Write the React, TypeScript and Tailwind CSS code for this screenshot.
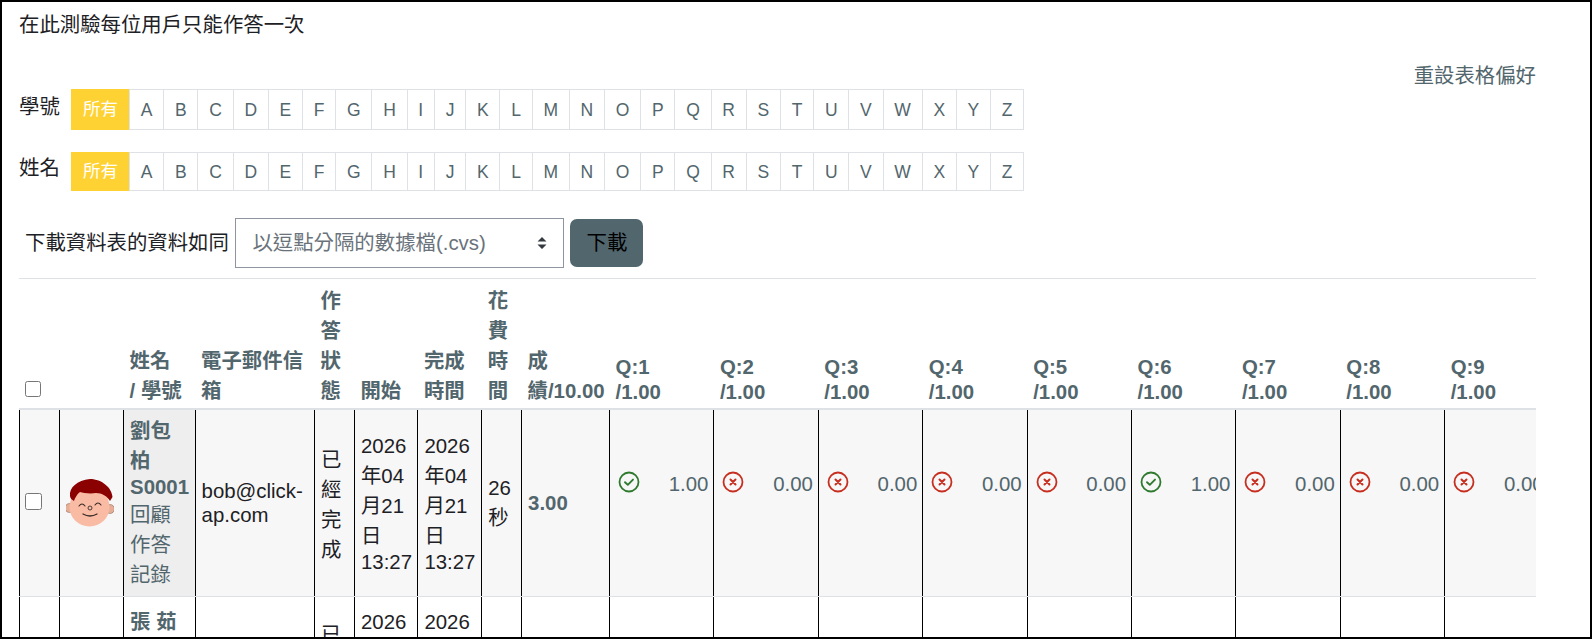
import React from "react";

const letters = "ABCDEFGHIJKLMNOPQRSTUVWXYZ".split("");

function Avatar() {
  return (
    <svg width="48" height="50" viewBox="16 18 48 50" className="block">
      <circle cx="19.500" cy="48" r="4.500" fill="#e6ae96" stroke="#7a6052" strokeWidth="0.5" />
      <circle cx="60" cy="49" r="4.500" fill="#e6ae96" stroke="#7a6052" strokeWidth="0.5" />
      <ellipse cx="39.500" cy="47" rx="20" ry="19.500" fill="#f9bba3" />
      <path d="M20 36C19 28 27 20 40 19c12 0 22 9 22.500 18L60 41c-3-5-8-8-14-8-6 1-13 0-16-1-3 2-5 6-6 9-2-1-4-3-4-5z" fill="#8b0000" />
      <path d="M29 46q3-4 6 0M45 45q3-4 6 0" fill="none" stroke="#3a2a25" strokeWidth="1.1" strokeLinecap="round" />
      <circle cx="40" cy="48" r="2" fill="none" stroke="#4a3a35" strokeWidth="1" />
      <path d="M33 54q7 4 14 0" fill="none" stroke="#3a2a25" strokeWidth="1.300" strokeLinecap="round" />
    </svg>
  );
}

function Mark({ ok }: { ok: boolean }) {
  const color = ok ? "#2f7a2f" : "#c62f20";
  return (
    <svg width="22" height="22" viewBox="0 0 22 22" className="-mt-[1px] block shrink-0">
      <circle cx="11" cy="11" r="9.500" fill="none" stroke={color} strokeWidth="1.800" />
      {ok ? (
        <path d="M7 11.200l2.800 2.600L15 8.600" fill="none" stroke={color} strokeWidth="1.900" strokeLinecap="round" strokeLinejoin="round" />
      ) : (
        <path d="M8.500 8.500l5 5M13.500 8.500l-5 5" fill="none" stroke={color} strokeWidth="2" strokeLinecap="round" />
      )}
    </svg>
  );
}

function LetterBar({ label, barClass, labelClass }: { label: string; barClass: string; labelClass: string }) {
  return (
    <div className={`flex items-start ${barClass}`}>
      <span className={`w-[52px] shrink-0 ${labelClass}`}>{label}</span>
      <div className="flex h-full text-[17.5px] leading-[24px] text-[#52666d]">
        <span className="flex items-center bg-[#ffd233] px-[12px] pb-[2px] text-white">所有</span>
        {letters.map((l) => (
          <span key={l} className="-ml-px flex items-center border border-[#dee2e6] px-[10.78px] first:ml-0">
            {l}
          </span>
        ))}
      </div>
    </div>
  );
}

const marks = [true, false, false, false, false, true, false, false, false];

function Row({ bg, nameBg, name, id, email, pad }: { bg: string; nameBg: string; name: string; id: string; email: string; pad: string }) {
  const cell = `border border-t-0 border-black border-b-[#dee2e6] px-[6px] align-middle ${pad}`;
  return (
    <tr className={bg}>
      <td className={`${cell} pl-[5px]`}>
        <input type="checkbox" className="mb-[4px] block h-[17px] w-[17px]" />
      </td>
      <td className={cell}><Avatar /></td>
      <td className={`${cell} ${nameBg} text-[#52666d]`}>
        <div className="font-bold">{name}</div>
        <div className="font-bold leading-[23.4px]">{id}</div>
        <div>回顧作答記錄</div>
      </td>
      <td className={`${cell} leading-[24.5px]`}>{email}</td>
      <td className={`${cell}`}><div className="pt-[3px]">已經完成</div></td>
      <td className={cell}>
        <div>2026年04月21日</div>
        <div className="leading-[23.4px]">13:27</div>
      </td>
      <td className={cell}>
        <div>2026年04月21日</div>
        <div className="leading-[23.4px]">13:27</div>
      </td>
      <td className={cell}>26秒</td>
      <td className={`${cell} font-bold text-[#52666d]`}>3.00</td>
      {marks.map((m, i) => (
        <td key={i} className={`${cell} pl-[8px] pr-[5px] text-[#52666d]`}>
          <div className="flex items-start justify-between pb-[38px] leading-[24px]">
            <Mark ok={m} />
            <span>{m ? "1.00" : "0.00"}</span>
          </div>
        </td>
      ))}
    </tr>
  );
}

export default function App() {
  const th = "px-[6px] pt-[7px] pb-[2px] text-left align-bottom font-bold";
  return (
    <div
      className="box-border h-[639px] w-[1592px] overflow-hidden border-2 border-black bg-white pl-[17px] pr-[54px] pt-[8px] text-[20.4px] leading-[30px] text-[#1d2125]"
      style={{ fontFamily: '"Liberation Sans", "Noto Sans CJK TC", sans-serif' }}
    >
      <div>在此測驗每位用戶只能作答一次</div>
      <div className="mt-[24px] text-right leading-[24px] text-[#52666d]">重設表格偏好</div>
      <LetterBar label="學號" barClass="mt-[1px] h-[41px]" labelClass="pt-[3px]" />
      <LetterBar label="姓名" barClass="mt-[22px] h-[39px]" labelClass="pt-[1px]" />
      <div className="mt-[27px] flex items-center pl-[6px]">
        <span className="mr-[6.5px]">下載資料表的資料如同</span>
        <div className="flex h-[49.5px] w-[329px] items-center justify-between border border-[#8f959e] pl-[16px] pr-[15px] text-[#6a737b]">
          <span>以逗點分隔的數據檔(.cvs)</span>
          <svg width="12" height="16" viewBox="0 0 12 16">
            <path d="M6 2L1.500 6.500h9zM6 14l-4.500-4.500h9z" fill="#343a40" />
          </svg>
        </div>
        <button className="ml-[6px] h-[48px] w-[73px] rounded-[7px] bg-[#52666d] text-black">下載</button>
      </div>
      <div className="mt-[10.5px] border-t border-[#dee2e6]" />
      <div className="overflow-hidden">
        <table className="w-[1530px] table-fixed border-collapse">
          <colgroup>
            <col className="w-[39.5px]" />
            <col className="w-[64.6px]" />
            <col className="w-[71.5px]" />
            <col className="w-[119.5px]" />
            <col className="w-[39.9px]" />
            <col className="w-[63.4px]" />
            <col className="w-[63.8px]" />
            <col className="w-[39.9px]" />
            <col className="w-[88px]" />
            {marks.map((_, i) => (
              <col key={i} className="w-[104.4px]" />
            ))}
          </colgroup>
          <thead className="text-[#52666d]">
            <tr className="border-b-2 border-[#dee2e6]">
              <th className={`${th} pl-[5px]`}>
                <input type="checkbox" className="mb-[9px] block h-[16px] w-[16px]" />
              </th>
              <th className={th}></th>
              <th className={th}>姓名<br />/ 學號</th>
              <th className={th}>電子郵件信箱</th>
              <th className={th}>作答狀態</th>
              <th className={th}>開始</th>
              <th className={th}>完成時間</th>
              <th className={th}>花費時間</th>
              <th className={th}>成績/10.00</th>
              {marks.map((_, i) => (
                <th key={i} className={`${th} pb-[4px] leading-[24.5px]`}>Q:{i + 1}<br />/1.00</th>
              ))}
            </tr>
          </thead>
          <tbody>
            <Row bg="bg-[#f7f7f7]" nameBg="bg-[#eeeeee]" name="劉包柏" id="S0001" email="bob@click-ap.com" pad="py-[6.3px]" />
            <Row bg="bg-white" nameBg="bg-white" name="張 茹" id="S0002" email="ru@click-ap.com" pad="py-[10px]" />
          </tbody>
        </table>
      </div>
    </div>
  );
}
